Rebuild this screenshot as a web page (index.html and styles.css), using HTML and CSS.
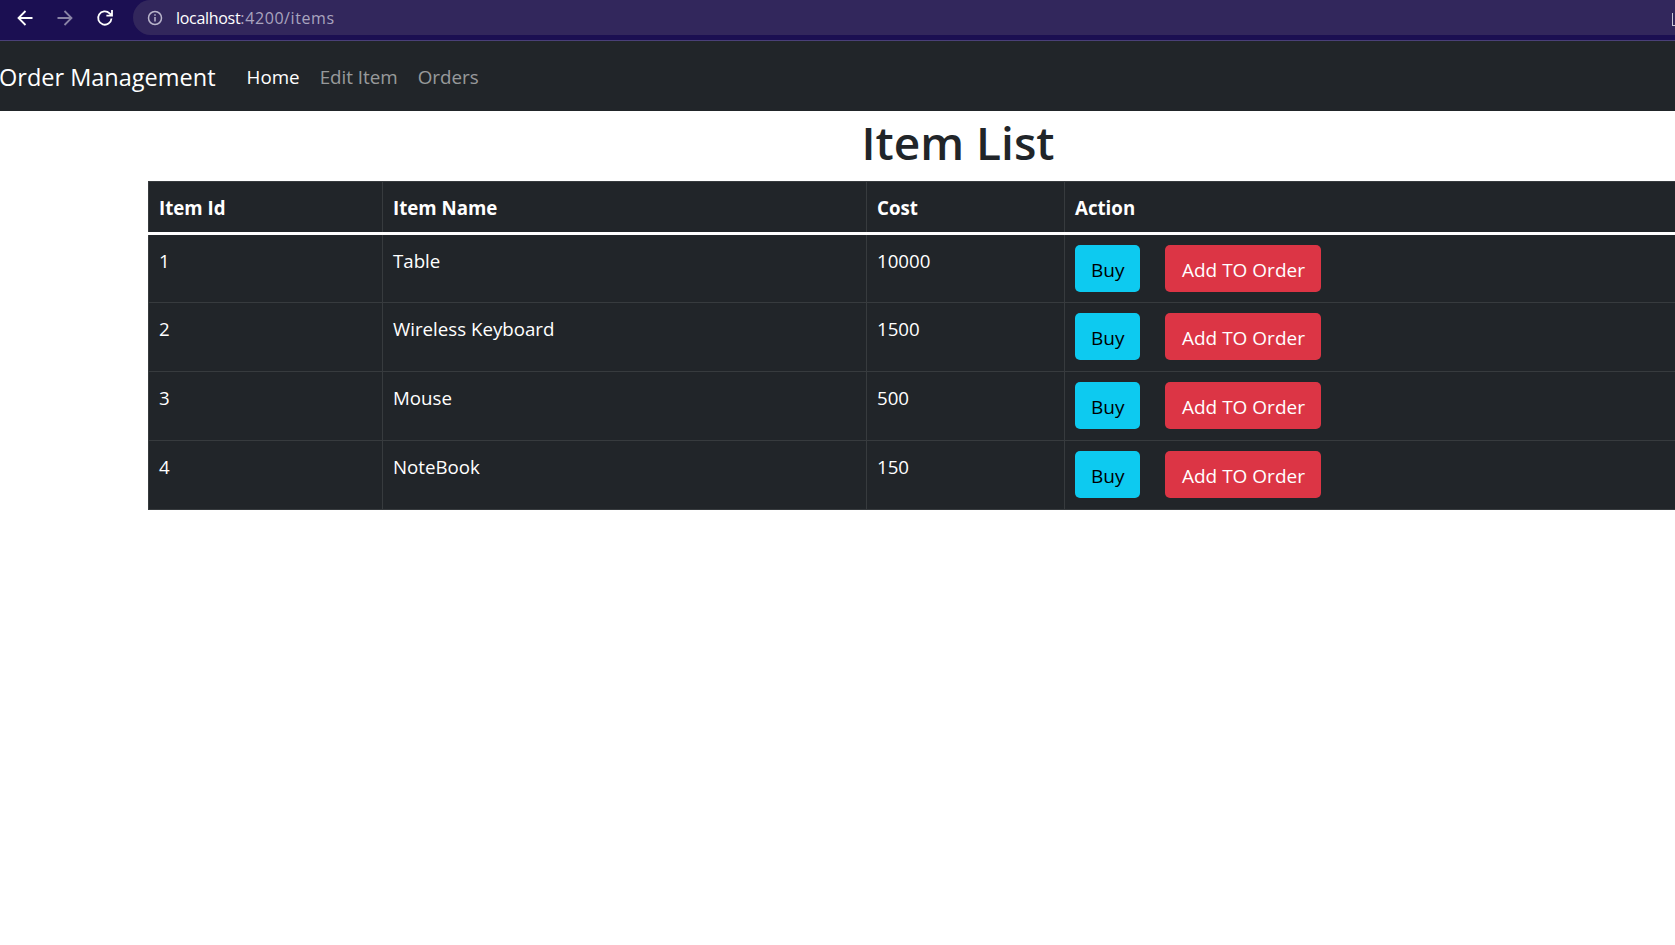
FILE: index.html
```html
<!DOCTYPE html>
<html lang="en">
<head>
  <meta charset="UTF-8" />
  <title>Order Management</title>
  <link rel="stylesheet" href="styles.css">
</head>
<body>

  <div class="browser-bar">
    <div class="browser-buttons">
      <svg class="browser-icon" viewBox="0 0 18 18"><path d="M16.5 9H2.5M9.5 2L2.5 9l7 7" /></svg>
      <svg class="browser-icon disabled" viewBox="0 0 18 18"><path d="M1.5 9h14M8.5 2l7 7-7 7" /></svg>
      <svg class="browser-icon" viewBox="0 0 18 18"><path d="M15.5 9.5a6.7 6.7 0 1 1-1.9-5.2L15.5 6.2M16 1v5.6h-5.6" /></svg>
    </div>
    <div class="address-bar">
      <svg class="info-icon" viewBox="0 0 16 16"><circle cx="8" cy="8" r="6.5" /><path d="M8 7v4.5M8 4.2v1.6" /></svg>
      <span class="url-host">localhost</span><span class="url-rest">:4200/items</span>
      <span class="profile-edge"></span>
    </div>
  </div>

  <nav class="navbar">
    <a class="brand" href="#">Order Management</a>
    <a class="nav-link active" href="#">Home</a>
    <a class="nav-link" href="#">Edit Item</a>
    <a class="nav-link" href="#">Orders</a>
  </nav>

  <div class="container">
    <h1>Item List</h1>
    <table>
      <thead>
        <tr>
          <th class="col-id">Item Id</th>
          <th class="col-name">Item Name</th>
          <th class="col-cost">Cost</th>
          <th>Action</th>
        </tr>
      </thead>
      <tbody>
        <tr>
          <td>1</td>
          <td>Table</td>
          <td>10000</td>
          <td><button class="btn btn-info">Buy</button><button class="btn btn-danger">Add TO Order</button></td>
        </tr>
        <tr>
          <td>2</td>
          <td>Wireless Keyboard</td>
          <td>1500</td>
          <td><button class="btn btn-info">Buy</button><button class="btn btn-danger">Add TO Order</button></td>
        </tr>
        <tr>
          <td>3</td>
          <td>Mouse</td>
          <td>500</td>
          <td><button class="btn btn-info">Buy</button><button class="btn btn-danger">Add TO Order</button></td>
        </tr>
        <tr>
          <td>4</td>
          <td>NoteBook</td>
          <td>150</td>
          <td><button class="btn btn-info">Buy</button><button class="btn btn-danger">Add TO Order</button></td>
        </tr>
      </tbody>
    </table>
  </div>

</body>
</html>
```

FILE: styles.css
```css
body {
  margin: 0;
  background: #fff;
  color: #212529;
  font-family: "Open Sans", "Noto Sans", sans-serif;
  font-size: 17px;
  overflow: hidden;
  height: 945px;
}

.browser-bar {
  display: flex;
  height: 40px;
  background: #1b0f52;
  border-bottom: 1px solid #4a4078;
}

.browser-buttons {
  display: flex;
  align-items: center;
  gap: 22px;
  height: 35px;
  padding-left: 16px;
  width: 117px;
}

.browser-icon {
  width: 18px;
  height: 18px;
  fill: none;
  stroke: #fff;
  stroke-width: 1.8;
}

.browser-icon.disabled {
  stroke: #8a84a6;
}

.address-bar {
  flex: 1;
  display: flex;
  align-items: center;
  height: 35px;
  background: #32275c;
  border-radius: 18px 0 0 18px;
  font-size: 16px;
  padding-left: 14px;
  position: relative;
}

.info-icon {
  width: 16px;
  height: 16px;
  margin-right: 13px;
  fill: none;
  stroke: #b9b5cb;
  stroke-width: 1.5;
}

.url-host {
  color: #fff;
  letter-spacing: -0.3px;
}

.url-rest {
  color: #a9a4bf;
  letter-spacing: 0.6px;
}

.profile-edge {
  position: absolute;
  right: 0;
  top: 13px;
  width: 2px;
  height: 12px;
  border-left: 1px solid #c9c6d6;
  border-bottom: 1px solid #c9c6d6;
}

.navbar {
  display: flex;
  align-items: center;
  height: 70px;
  padding-top: 2px;
  box-sizing: border-box;
  background: #212529;
}

.brand {
  color: #fff;
  font-size: 23.5px;
  text-decoration: none;
  margin-left: -1px;
  margin-right: 31px;
}

.nav-link {
  color: rgba(255, 255, 255, 0.55);
  text-decoration: none;
  margin-right: 20px;
  font-size: 18.8px;
}

.nav-link.active {
  color: #fff;
}

.container {
  margin-left: 148px;
  width: 1620px;
}

h1 {
  margin: 0;
  height: 70px;
  line-height: 63px;
  font-size: 46px;
  font-weight: 600;
  text-align: center;
}

table {
  width: 100%;
  table-layout: fixed;
  border-collapse: collapse;
  background: #212529;
  color: #fff;
  font-size: 18.7px;
}

th, td {
  border: 1px solid #373b3e;
  text-align: left;
  vertical-align: top;
}

th {
  padding: 10px 10px 8px;
  line-height: 32px;
  font-weight: 700;
  border-bottom: 3px solid #fff;
}

td {
  height: 50px;
  padding: 10px 10px 8px;
  line-height: 32px;
}

tbody tr:first-child td {
  height: 49px;
}

.col-id {
  width: 213px;
}

.col-name {
  width: 463px;
}

.col-cost {
  width: 177px;
}

.btn {
  height: 47px;
  padding: 2px 16.5px 0;
  border: 0;
  border-radius: 5px;
  font-family: inherit;
  font-size: 19px;
  vertical-align: top;
}

.btn-info {
  background: #0dcaf0;
  color: #000;
  padding: 2px 16px 0;
  margin-right: 25px;
}

.btn-danger {
  background: #dc3545;
  color: #fff;
}
```
